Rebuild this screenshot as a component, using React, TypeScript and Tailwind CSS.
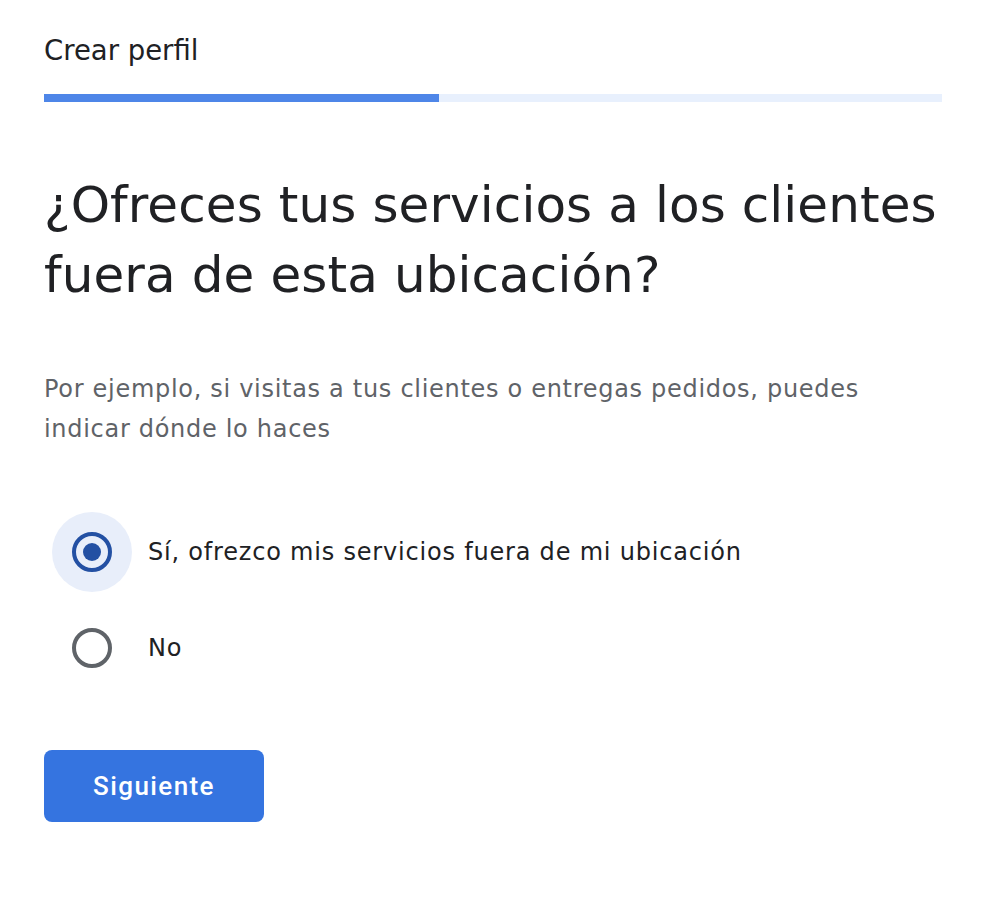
import React, { useState } from "react";

const options = [
  { id: "yes", label: "Sí, ofrezco mis servicios fuera de mi ubicación" },
  { id: "no", label: "No" },
];

const App = () => {
  const [choice, setChoice] = useState("yes");

  return (
    <div className="min-h-screen bg-white px-[44px] pt-[30px] font-['DejaVu_Sans',sans-serif] text-[#202124]">
      <h1 className="text-[27.5px] leading-[40px]">Crear perfil</h1>

      {/* Progress */}
      <div className="mt-[24px] flex h-[8px] w-[898px] bg-[#e8f0fd]">
        <div className="h-full w-[44%] bg-[#4e86e8]" />
      </div>

      <h2 className="mt-[68px] w-[910px] text-[50px] leading-[70px] tracking-[0.1px]">
        ¿Ofreces tus servicios a los clientes fuera de esta ubicación?
      </h2>

      <p className="mt-[59px] w-[898px] text-[24px] leading-[40px] tracking-[0.7px] text-[#5f6368]">
        Por ejemplo, si visitas a tus clientes o entregas pedidos, puedes indicar dónde lo haces
      </p>

      {/* Radio options */}
      <div className="mt-[63px] ml-[8px] flex flex-col gap-[16px]">
        {options.map((o) => {
          const selected = choice === o.id;
          return (
            <label
              key={o.id}
              className="flex cursor-pointer items-center gap-[16px]"
              onClick={() => setChoice(o.id)}
            >
              <span
                className={
                  selected
                    ? "flex h-[80px] w-[80px] items-center justify-center rounded-full bg-[#e8eefa]"
                    : "flex h-[80px] w-[80px] items-center justify-center rounded-full"
                }
              >
                <span
                  className={
                    selected
                      ? "flex h-[40px] w-[40px] items-center justify-center rounded-full border-[4px] border-[#2350a3]"
                      : "flex h-[40px] w-[40px] items-center justify-center rounded-full border-[4px] border-[#5f6368]"
                  }
                >
                  {selected && <span className="h-[18px] w-[18px] rounded-full bg-[#2350a3]" />}
                </span>
              </span>
              <span className="text-[24px] leading-[32px] tracking-[0.8px]">{o.label}</span>
            </label>
          );
        })}
      </div>

      <button className="mt-[62px] flex h-[72px] w-[220px] items-center justify-center rounded-[8px] bg-[#3574e0] font-['Roboto',sans-serif] text-[26px] font-medium tracking-[1.4px] text-white">
        Siguiente
      </button>
    </div>
  );
};

export default App;
